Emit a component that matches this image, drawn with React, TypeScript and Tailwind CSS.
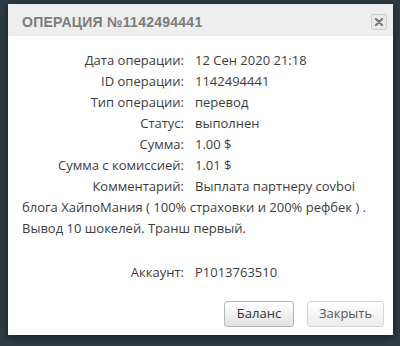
import React from "react";

const rows: [string, string][] = [
  ["Дата операции:", "12 Сен 2020 21:18"],
  ["ID операции:", "1142494441"],
  ["Тип операции:", "перевод"],
  ["Статус:", "выполнен"],
  ["Сумма:", "1.00 $"],
  ["Сумма с комиссией:", "1.01 $"],
];

export default function App() {
  return (
    <div
      className="w-[400px] h-[346px] bg-[#2e3b42] pt-[4px] pl-[8px] overflow-hidden"
      style={{ fontFamily: '"Open Sans", "Noto Sans", sans-serif' }}
    >
      <div className="w-[385px] h-[331px] bg-white flex flex-col shadow-[0_2px_8px_rgba(0,0,0,0.5)]">
        <div className="h-[32px] bg-[#eeeeee] flex items-start justify-between pl-[14px] pr-[6px]">
          <div
            className="text-[14px] font-bold text-[#7c7c7c] tracking-[0.25px] uppercase mt-[8px] leading-[20px]"
            style={{ fontFamily: '"Liberation Sans", Arial, sans-serif' }}
          >
            Операция №1142494441
          </div>
          <div className="w-[16px] h-[16px] mt-[10px] bg-[#e9e9e9] border border-[#cfcfcf] rounded-[2px] flex items-center justify-center">
            <svg width="8" height="8" viewBox="0 0 8 8">
              <path d="M1 1L7 7M7 1L1 7" stroke="#777" strokeWidth="2.2" strokeLinecap="round" />
            </svg>
          </div>
        </div>
        <div className="pl-[14px] pr-[12px] pt-[14px] text-[13px] leading-[21px] text-[#3d3d3d] flex-1">
          {rows.map(([l, v]) => (
            <div key={l}>
              <span className="inline-block w-[162px] text-right">{l}</span>
              <span className="ml-[11px]">{v}</span>
            </div>
          ))}
          <div>
            <span className="inline-block w-[162px] text-right">Комментарий:</span>
            <span className="ml-[11px]">
              Выплата партнеру covboi блога ХайпоМания ( 100% страховки и 200% рефбек ) . Вывод 10 шокелей. Транш первый.
            </span>
          </div>
          <div className="mt-[23px]">
            <span className="inline-block w-[162px] text-right">Аккаунт:</span>
            <span className="ml-[11px]">P1013763510</span>
          </div>
        </div>
        <div className="flex justify-end gap-[13px] pr-[9px] pb-[8px]">
          <button className="h-[26px] w-[70px] rounded-[3px] border border-[#b5b5b5] bg-gradient-to-b from-[#ffffff] to-[#e2e2e2] text-[13px] text-[#333]">
            Баланс
          </button>
          <button className="h-[26px] w-[77px] rounded-[3px] border border-[#d5d5d5] bg-gradient-to-b from-[#ffffff] to-[#ececec] text-[13px] text-[#555]">
            Закрыть
          </button>
        </div>
      </div>
    </div>
  );
}
